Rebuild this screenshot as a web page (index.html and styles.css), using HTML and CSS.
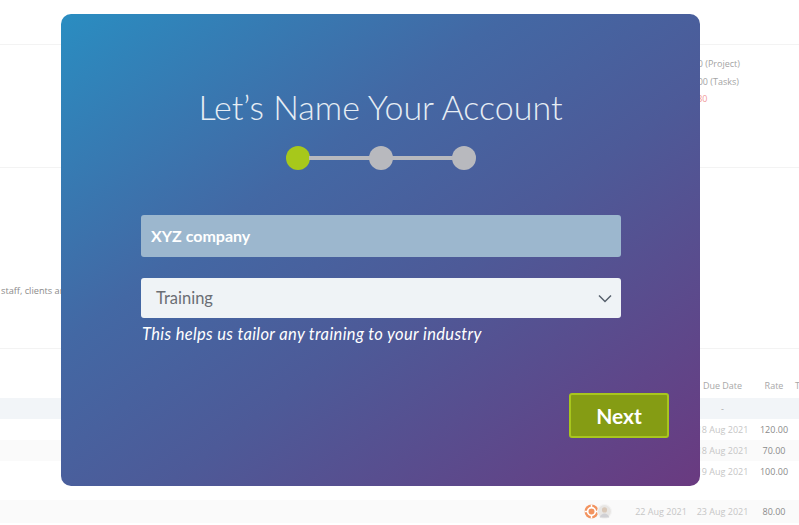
FILE: index.html
```html
<!DOCTYPE html>
<html>
<head>
<meta charset="utf-8">
<link rel="stylesheet" href="styles.css">
</head>
<body>
<div class="page">
  <div class="bg-top"></div>
  <div class="bg-stats">
    <div class="stats">
      <div class="stat">£0.00 (Project)</div>
      <div class="stat s2">£0.00 (Tasks)</div>
      <div class="stat s3 red">£30</div>
    </div>
  </div>
  <div class="bg-info">
    <div class="info-text">staff, clients and customers</div>
  </div>
  <div class="bg-table">
    <div class="row head">
      <div class="c-av"></div>
      <div class="c-start">Start Date</div>
      <div class="c-due">Due Date</div>
      <div class="c-rate">Rate</div>
      <div class="c-t">T</div>
    </div>
    <div class="row blue">
      <div class="c-av"></div>
      <div class="c-start"></div>
      <div class="c-due">-</div>
      <div class="c-rate"></div>
      <div class="c-t"></div>
    </div>
    <div class="row">
      <div class="c-av"></div>
      <div class="c-start">12 Aug 2021</div>
      <div class="c-due">18 Aug 2021</div>
      <div class="c-rate num">120.00</div>
      <div class="c-t"></div>
    </div>
    <div class="row grey">
      <div class="c-av"></div>
      <div class="c-start">12 Aug 2021</div>
      <div class="c-due">18 Aug 2021</div>
      <div class="c-rate num">70.00</div>
      <div class="c-t"></div>
    </div>
    <div class="row">
      <div class="c-av"></div>
      <div class="c-start">12 Aug 2021</div>
      <div class="c-due">19 Aug 2021</div>
      <div class="c-rate num">100.00</div>
      <div class="c-t"></div>
    </div>
    <div class="row spacer"></div>
    <div class="row grey last">
      <div class="c-av">
        <svg class="av" width="15" height="15" viewBox="0 0 14 14">
          <circle cx="7" cy="7" r="6.5" fill="#f2935f"/>
          <circle cx="7" cy="7" r="3.6" fill="none" stroke="#fff" stroke-width="1.6"/>
          <path d="M7 0.5v3M7 10.5v3M0.5 7h3M10.5 7h3" stroke="#fff" stroke-width="1.4"/>
        </svg>
        <svg class="av av2" width="15" height="15" viewBox="0 0 14 14">
          <circle cx="7" cy="7" r="6.5" fill="#e8e6e4" stroke="#f4f4f4" stroke-width="1"/>
          <circle cx="7" cy="5.5" r="2.4" fill="#d9c8b8"/>
          <path d="M2.5 12.5c1-2.6 2.6-3.6 4.5-3.6s3.5 1 4.5 3.6z" fill="#d0d0d4"/>
        </svg>
      </div>
      <div class="c-start">22 Aug 2021</div>
      <div class="c-due">23 Aug 2021</div>
      <div class="c-rate num">80.00</div>
      <div class="c-t"></div>
    </div>
  </div>
</div>

<div class="modal">
  <h1 class="title">Let’s Name Your Account</h1>
  <div class="steps">
    <span class="dot active"></span>
    <span class="bar"></span>
    <span class="dot"></span>
    <span class="bar"></span>
    <span class="dot"></span>
  </div>
  <div class="form">
    <div class="field name">XYZ company</div>
    <div class="field select">
      <span>Training</span>
      <svg width="14" height="9" viewBox="0 0 14 9"><polyline points="1,1.5 7,7.5 13,1.5" fill="none" stroke="#56606c" stroke-width="1.5"/></svg>
    </div>
    <div class="help">This helps us tailor any training to your industry</div>
  </div>
  <div class="footer">
    <button class="next">Next</button>
  </div>
</div>
</body>
</html>
```

FILE: styles.css
```css
html, body {
  margin: 0;
  padding: 0;
  background: #fff;
  font-family: "Open Sans", "Liberation Sans", sans-serif;
}
.page {
  width: 799px;
  height: 525px;
  overflow: hidden;
}
.bg-top {
  height: 44px;
  border-bottom: 1px solid #f3f3f3;
}
.bg-stats {
  height: 122px;
  border-bottom: 1px solid #f3f3f3;
  display: flex;
}
.stats {
  margin-left: 680px;
  padding-top: 10px;
  font-size: 9px;
  color: #a4a4a4;
  line-height: 17.5px;
  white-space: nowrap;
}
.stat.s2 { padding-left: 5px; }
.stat.s3 { padding-left: 12px; }
.stat.red { color: #f29a9a; }
.bg-info {
  height: 180px;
  border-bottom: 1px solid #f3f3f3;
}
.info-text {
  padding-top: 116px;
  padding-left: 1px;
  font-size: 9.2px;
  color: #8c8c8c;
  white-space: nowrap;
}
.bg-table {
  font-size: 9px;
}
.row {
  display: flex;
  height: 21px;
  align-items: center;
  color: #c6c6c6;
  white-space: nowrap;
}
.row.head {
  height: 49px;
  padding-top: 23px;
  box-sizing: border-box;
  color: #a8a8a8;
}
.row.blue { background: #f2f5f8; color: #aaa; }
.row.grey { background: #fafafa; }
.row.spacer { height: 18px; }
.row.last { height: 23px; }
.row > div { flex: none; text-align: center; }
.c-av {
  width: 631px;
  display: flex;
  justify-content: flex-end;
  padding-right: 19px;
  box-sizing: border-box;
}
.c-start { width: 60px; }
.c-due { width: 63px; }
.c-rate { width: 40px; }
.c-t { width: 5px; text-align: left !important; padding-left: 1px; }
.num { color: #8a8a8a; }
.av { display: block; }
.av2 { margin-left: -2px; }

/* modal */
.modal {
  position: absolute;
  left: 61px;
  top: 14px;
  width: 639px;
  height: 472px;
  border-radius: 10px;
  background: linear-gradient(to bottom right, #2a8dc1 0%, #4368a4 35%, #4d5a98 58%, #6a3a80 100%);
  box-sizing: border-box;
  padding-top: 73px;
  font-family: Lato, "Open Sans", sans-serif;
}
.title {
  margin: 0;
  text-align: center;
  font-weight: 300;
  font-size: 34px;
  line-height: 40px;
  color: #e6edf4;
}
.steps {
  margin-top: 19px;
  display: flex;
  justify-content: center;
  align-items: center;
  height: 24px;
}
.dot {
  width: 24px;
  height: 24px;
  border-radius: 50%;
  background: #b8b9be;
  flex: none;
}
.dot.active { background: #a7c81b; }
.bar {
  width: 61px;
  height: 4px;
  background: #b8b9be;
  margin: 0 -1px;
}
.form {
  width: 480px;
  margin-left: 80px;
}
.field {
  box-sizing: border-box;
  border-radius: 3px;
}
.field.name {
  margin-top: 45px;
  height: 42px;
  background: #9cb7ce;
  color: #fff;
  font-weight: 700;
  font-size: 16px;
  line-height: 42px;
  padding-left: 10px;
}
.field.select {
  margin-top: 21px;
  height: 40px;
  background: #eff3f6;
  color: #6a6e74;
  font-size: 16.5px;
  display: flex;
  align-items: center;
  justify-content: space-between;
  padding: 0 9px 0 15px;
}
.field.select svg { display: block; }
.help {
  margin-top: 6px;
  line-height: 20px;
  font-size: 16.5px;
  letter-spacing: 0.35px;
  font-style: italic;
  color: #fff;
  padding-left: 1px;
}
.footer {
  margin-top: 49px;
  display: flex;
  justify-content: flex-end;
  padding-right: 31px;
}
.next {
  width: 100px;
  height: 45px;
  background: #859c14;
  border: 2px solid #a8c61d;
  border-radius: 3px;
  color: #fff;
  font-family: Lato, "Open Sans", sans-serif;
  font-weight: 700;
  font-size: 21px;
  padding: 0;
}
```
